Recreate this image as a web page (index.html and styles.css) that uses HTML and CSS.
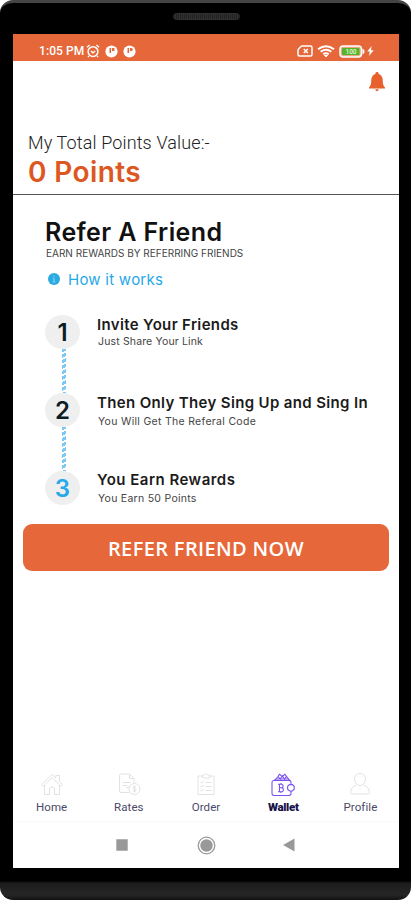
FILE: index.html
```
<!DOCTYPE html>
<html lang="en">
<head>
    <meta charset="UTF-8" />
    <meta name="viewport" content="width=device-width, initial-scale=1.0" />
    <title>Refer A Friend</title>
    <link rel="stylesheet" href="styles.css">
</head>
<body>
    <div class="phone">
        <div class="speaker"></div>
        <div class="screen">
            <header class="status-bar">
                <span class="time">1:05 PM</span>
                <svg class="alarm" width="14" height="14" viewBox="0 0 14 14" fill="none" stroke="#fff" stroke-width="1.5">
                    <circle cx="7" cy="7.6" r="4.9" />
                    <path d="M1 3.2 3.6 1M13 3.2 10.4 1M5 7.2 7 8.8 9.2 7M3 12l-1 1M11 12l1 1" />
                </svg>
                <svg class="app-dot" width="13" height="13" viewBox="0 0 13 13">
                    <circle cx="6.5" cy="6.5" r="6.1" fill="#fff" />
                    <path d="M4.500 3h1.600v5H4.500zM7 3h1.500q1.300.2 1.300 1.500T8.500 6H7z" fill="#e66739" />
                </svg>
                <svg class="app-dot" width="13" height="13" viewBox="0 0 13 13">
                    <circle cx="6.5" cy="6.5" r="6.1" fill="#fff" />
                    <path d="M4.500 3h1.600v5H4.500zM7 3h1.500q1.300.2 1.300 1.500T8.500 6H7z" fill="#e66739" />
                </svg>
                <span class="spacer"></span>
                <svg class="sim" width="16" height="12" viewBox="0 0 16 12" fill="none" stroke="#fff" stroke-width="1.5">
                    <path d="M5 1h8.5q1.5 0 1.5 1.5v7q0 1.500-1.500 1.500H2.500Q1 11 1 9.500V5.500Q1 4.500 1.800 3.700L4 1.500Q4.500 1 5 1z" />
                    <path d="M6.800 4l4 4M10.800 4l-4 4" />
                </svg>
                <svg class="wifi" width="18" height="13" viewBox="0 0 18 13" fill="none" stroke="#fff" stroke-width="2">
                    <path d="M1 4.200q8-6 16 0M3.600 6.800q5.400-4 10.800 0M6.200 9.300q2.800-2 5.600 0" />
                    <path d="M7.500 10.500 9 12l1.500-1.500z" fill="#fff" stroke-width="1" />
                </svg>
                <svg class="battery" width="26" height="13" viewBox="0 0 26 13">
                    <rect x="1" y="1" width="21.5" height="11" rx="3.2" fill="#e8a888" stroke="#fff" stroke-width="1.5" />
                    <rect x="3" y="3" width="17.5" height="7" rx="1" fill="#54b52a" />
                    <path d="M23.500 3.500v6l1.900-1.800v-2.400z" fill="#fff" />
                    <text x="12" y="9" text-anchor="middle">100</text>
                </svg>
                <svg class="bolt" width="7" height="10" viewBox="0 0 7 10">
                    <path d="M4.600 0 .3 5.600h2.500L2 10l4.700-5.800H4z" fill="#fff" />
                </svg>
            </header>

            <div class="top-bar">
                <svg width="16" height="20" viewBox="0 0 16 20" fill="#e8602c">
                    <path d="M8 0a1.500 1.500 0 0 1 1.500 1.700C12 2.600 13.600 5 13.700 7.600c.1 3.800.3 6.200 2.300 7.900v.9H0v-.9c2-1.700 2.200-4.100 2.300-7.900C2.400 5 4 2.600 6.500 1.700A1.500 1.500 0 0 1 8 0z" />
                    <path d="M6.300 17.200h3.400Q9.400 19.200 8 19.200t-1.700-2z" />
                </svg>
            </div>

            <section class="points">
                <p class="points-label">My Total Points Value:-</p>
                <p class="points-value">0 Points</p>
            </section>

            <section class="refer">
                <h1>Refer A Friend</h1>
                <p class="tagline">EARN REWARDS BY REFERRING FRIENDS</p>
                <a class="how">
                    <svg width="12" height="12" viewBox="0 0 12 12">
                        <circle cx="6" cy="6" r="6" fill="#29aae1" />
                        <path d="M6 2.500v1.300M4.900 5.200H6v3.500M4.600 8.900h2.800" fill="none" stroke="#8fd6f2" stroke-width="1" />
                    </svg>
                    <span>How it works</span>
                </a>

                <ol class="steps">
                    <li class="step">
                        <div class="number">1</div>
                        <div class="info">
                            <h2 class="invite">Invite Your Friends</h2>
                            <p class="share">Just Share Your Link</p>
                        </div>
                    </li>
                    <li class="step">
                        <div class="number">2</div>
                        <div class="info">
                            <h2 class="signup">Then Only They Sing Up and Sing In</h2>
                            <p class="code">You Will Get The Referal Code</p>
                        </div>
                    </li>
                    <li class="step">
                        <div class="number current">3</div>
                        <div class="info">
                            <h2 class="earn">You Earn Rewards</h2>
                            <p class="earned">You Earn 50 Points</p>
                        </div>
                    </li>
                </ol>
            </section>

            <button class="refer-btn">REFER FRIEND NOW</button>

            <nav class="tabs">
                <a class="tab">
                    <svg width="24" height="24" viewBox="0 0 24 24">
                        <path d="M1.500 12.500 12 2.500l3.800 3.600V3.500h3.700v6l3 3-1.600 1.700L12 5.700l-8.900 8.500zM4.500 13v9.500h5V16q2.500-3 5 0v6.500h5V13" />
                    </svg>
                    <span>Home</span>
                </a>
                <a class="tab">
                    <svg width="24" height="24" viewBox="0 0 24 24">
                        <path d="M12 20.500H4Q2.500 20.500 2.500 19V3.500Q2.500 2 4 2h8.500L17 6.500V11M12.500 2v4.500H17M5.500 10.500h8M5.500 13.500h5M9 16l4-1.500" />
                        <circle cx="17.500" cy="17" r="5.500" />
                        <path d="M19 15q-3-1.500-3 .7c0 1.600 3 1 3 2.600 0 1.800-3 1-3.200.2M17.500 13.500v7" />
                    </svg>
                    <span>Rates</span>
                </a>
                <a class="tab">
                    <svg width="24" height="24" viewBox="0 0 24 24">
                        <path d="M8.500 4H4v18.500h16V4h-4.500M8.500 6V3h2q1.500-2.500 3 0h2v3zM6.500 10l1.200 1.200L9.500 9M6.500 14l1.200 1.200L9.500 13M6.500 18l1.200 1.200L9.500 17M11.500 10.500h6M11.500 14.500h6M11.500 18.500h6" />
                    </svg>
                    <span>Order</span>
                </a>
                <a class="tab active">
                    <svg width="24" height="24" viewBox="0 0 24 24">
                        <path d="M20 13.500V10.500q0-2-2-2H2.500Q1 8.500 1 10.500v11q0 2 2 2h15q2 0 2-2V19M3 8.500l2-1.500h12.500l2 2" />
                        <path d="M19 12.500h2.500l1.700 1.800v2.900L21.500 19H19q-2.500-.5-2.500-3.200t2.500-3.300zM5 7l2-2.500L9.300 7l2-3L13.500 7l2-2.500 2 2.500M7 4.500 8.500 2.300l2.800 2.200 2.700-2.200 1.500 2.200" />
                        <path d="M7 12.200h3.500q1.700.2 1.700 1.800T10.500 15.800H8.500M10.500 15.800q2 .2 2 2T10.500 19.800H7M8.500 12.200v7.600M10 11v1.200M10 19.800V21" />
                    </svg>
                    <span>Wallet</span>
                </a>
                <a class="tab">
                    <svg width="24" height="24" viewBox="0 0 24 24">
                        <path d="M12 1.500c3.500 0 5.500 2.400 5.500 5.300S15 13.500 12 13.500 6.500 9.700 6.500 6.800 8.500 1.500 12 1.500zM8.500 13Q3 15 2.500 20.500q0 1.500 1.500 1.500h16q1.500 0 1.500-1.500Q21 15 15.500 13" />
                    </svg>
                    <span>Profile</span>
                </a>
            </nav>

            <footer class="system-nav">
                <svg width="12" height="12" viewBox="0 0 12 12"><path d="M.3.300h11.400v11.400H.3z" /></svg>
                <svg width="19" height="19" viewBox="0 0 19 19">
                    <circle cx="9.500" cy="9.500" r="8.300" fill="none" stroke="#999" stroke-width="1.300" />
                    <circle cx="9.500" cy="9.500" r="6.200" />
                </svg>
                <svg class="back" width="12" height="14" viewBox="0 0 12 14"><path d="M0 7 11.500.500v13z" /></svg>
            </footer>
        </div>
    </div>
</body>
</html>
```
FILE: styles.css
```
* {
    box-sizing: border-box;
}

body {
    margin: 0;
    background-color: #fff;
    font-family: Inter, Roboto, sans-serif;
}

h1, h2, p, ol {
    margin: 0;
    padding: 0;
    font-weight: 400;
    white-space: nowrap;
}

/* Phone frame */
.phone {
    height: 900px;
    padding: 10px 12px 0 13px;
    border-radius: 13px;
    border-top: 3px solid #444;
    background: linear-gradient(#000 878px, #1c1c1c 880px, #262626 892px, #111 897px);
    overflow: hidden;
}

.speaker {
    width: 67px;
    height: 7px;
    margin: 0 auto 14px 160px;
    border-radius: 4px;
    background: repeating-linear-gradient(90deg, #222 0 1px, #303030 1px 2px);
    border: 1px solid #303030;
}

.screen {
    display: flex;
    flex-direction: column;
    height: 834px;
    background-color: #fff;
}

/* Status bar */
.status-bar {
    display: flex;
    align-items: center;
    height: 27px;
    padding: 7px 25px 0 26px;
    background-color: #e66739;
    color: #fff;
}

.time {
    width: 47px;
    font: 500 12px/14px Roboto, sans-serif;
    letter-spacing: 0.1px;
    white-space: nowrap;
}

.app-dot {
    margin-left: 5px;
}

.spacer {
    flex: 1;
}

.wifi {
    margin: 0 4px 0 4px;
}

.battery text {
    font: 500 6.5px Roboto, sans-serif;
    fill: #e4f5dc;
}

.bolt {
    margin-left: 2px;
}

.top-bar {
    display: flex;
    justify-content: flex-end;
    height: 69px;
    padding: 11px 14px 0 0;
}

/* Points */
.points {
    height: 65px;
    padding: 2px 15px 0;
    border-bottom: 1px solid #555;
}

.points-label {
    font: 300 18px/22px Roboto, sans-serif;
    letter-spacing: 0.13px;
    color: #222;
}

.points-value {
    padding-top: 1px;
    font: 600 28px/34px Inter, sans-serif;
    letter-spacing: 0.4px;
    color: #dd5722;
}

/* Refer a friend */
.refer {
    padding: 22px 0 0 32px;
}

.refer h1 {
    font-size: 25px;
    line-height: 30px;
    font-weight: 600;
    letter-spacing: 0.4px;
    color: #111;
}

.tagline {
    padding-left: 1px;
    font-size: 10px;
    line-height: 12px;
    color: #444;
}

.how {
    display: flex;
    align-items: center;
    gap: 8px;
    height: 18px;
    margin-top: 11px;
    padding-left: 3px;
    font-size: 15px;
    letter-spacing: 0.25px;
    color: #1fa9e8;
}

.steps {
    display: flex;
    flex-direction: column;
    gap: 44px;
    margin-top: 27px;
    list-style: none;
}

.step {
    display: flex;
    position: relative;
    height: 34px;
}

/* dashed line down to the next number */
.step:not(:last-child)::after {
    content: "";
    position: absolute;
    top: 34px;
    left: 17px;
    width: 4px;
    height: 44px;
    background: repeating-linear-gradient(155deg, #7cc9f5 0 3px, #fff 3px 5px);
}

.number {
    width: 35px;
    height: 34px;
    margin-right: 17px;
    border-radius: 50%;
    background-color: #f0efef;
    font-size: 24px;
    line-height: 35px;
    font-weight: 600;
    text-align: center;
    color: #0c1c26;
}

.number.current {
    color: #27aaea;
}

.info h2 {
    padding-top: 1px;
    font-size: 15px;
    line-height: 18px;
    font-weight: 600;
    letter-spacing: 0.35px;
    color: #1b1b1b;
}

.info p {
    padding-left: 1px;
    font-size: 10.5px;
    line-height: 17px;
    color: #444;
}

.info .earn {
    padding-top: 0;
    letter-spacing: 0.48px;
}

.info .share {
    margin-top: -1px;
    letter-spacing: 0.15px;
}

.info .code {
    padding-top: 1px;
    letter-spacing: 0.3px;
}

.info .earned {
    padding-top: 1px;
    letter-spacing: 0.27px;
}

.refer-btn {
    height: 47px;
    margin: 19px 10px 0 10px;
    border: none;
    border-radius: 9px;
    background-color: #e66739;
    font: 600 20px/47px "Open Sans", sans-serif;
    letter-spacing: 0.36px;
    color: #fff;
}

/* Bottom tabs */
.tabs {
    display: flex;
    height: 50px;
    margin-top: auto;
    border-bottom: 1px solid #fafafa;
}

.tab {
    display: flex;
    flex: 1;
    flex-direction: column;
    align-items: center;
    font: 400 11.5px/14px Roboto, sans-serif;
    letter-spacing: 0.1px;
    color: #4c4868;
}

.tab svg {
    margin-bottom: 4px;
    fill: none;
    stroke: #e2e2e2;
    stroke-width: 1;
}

.tab.active {
    font-weight: 900;
    letter-spacing: -0.3px;
    color: #17124a;
}

.tab.active svg {
    stroke: #7a50ee;
    stroke-width: 1.1;
}

/* System navigation */
.system-nav {
    display: flex;
    align-items: center;
    justify-content: center;
    gap: 69px;
    height: 46px;
    fill: #999;
}

.back {
    margin-left: -2px;
    margin-right: 2px;
}
```
